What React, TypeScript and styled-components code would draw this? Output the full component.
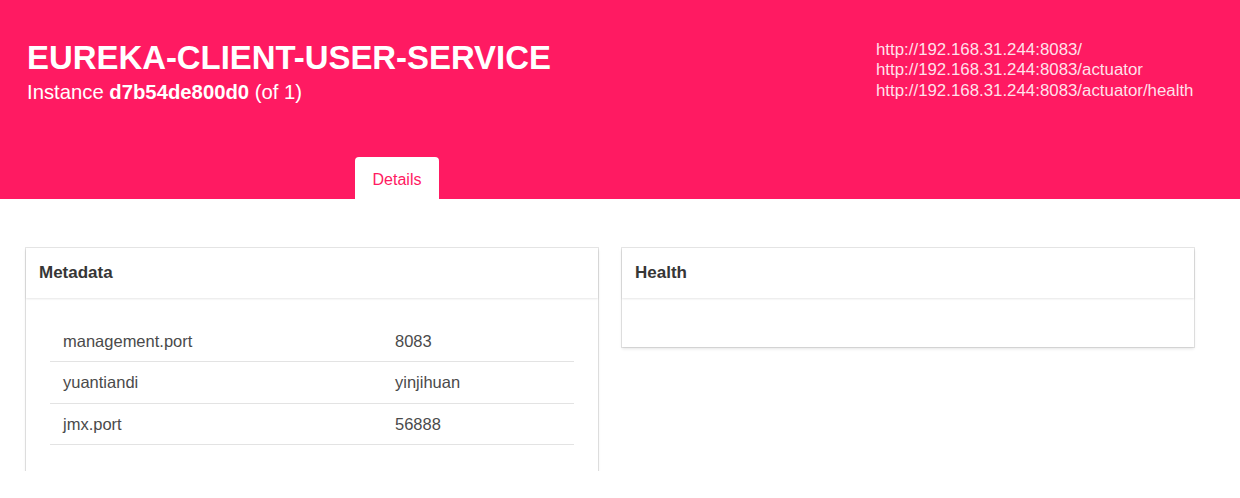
import React from "react";
import styled, { createGlobalStyle } from "styled-components";

const Global = createGlobalStyle`
  html, body { margin: 0; padding: 0; background: #fff; }
  body { font-family: "Liberation Sans", Arial, sans-serif; color: #4a4a4a; }
  * { box-sizing: border-box; }
`;

const PINK = "#ff1a62";

const Hero = styled.header`
  background: ${PINK};
  height: 199px;
  display: flex;
  flex-direction: column;
  justify-content: space-between;
  padding: 40px 0 0 27px;
`;

const HeroTop = styled.div`
  display: grid;
  grid-template-columns: 1fr 364px;
  align-items: start;
`;

const Title = styled.h1`
  margin: 0;
  font-size: 32.9px;
  line-height: 36px;
  font-weight: 700;
  color: #fff;
`;

const Subtitle = styled.h2`
  margin: 3px 0 0;
  font-size: 20.3px;
  line-height: 26px;
  font-weight: 400;
  color: #fff;
  b { font-weight: 700; }
`;

const Links = styled.ul`
  list-style: none;
  margin: 0;
  padding: 0;
  font-size: 16.85px;
  line-height: 20.4px;
`;

const LinkItem = styled.li`
  a { color: rgba(255, 255, 255, 0.88); text-decoration: none; }
`;

const Tabs = styled.nav`
  display: flex;
  padding-left: 328px;
`;

const Tab = styled.a<{ $active?: boolean }>`
  display: block;
  width: 84px;
  height: 42px;
  line-height: 46px;
  text-align: center;
  font-size: 16px;
  border-radius: 4px 4px 0 0;
  background: ${(p) => (p.$active ? "#fff" : "transparent")};
  color: ${(p) => (p.$active ? PINK : "#fff")};
  text-decoration: none;
`;

const Body = styled.main`
  display: grid;
  grid-template-columns: 572px 572px;
  column-gap: 24px;
  align-items: start;
  padding: 49px 0 0 26px;
`;

const Card = styled.section`
  background: #fff;
  box-shadow: 0 2px 3px rgba(10, 10, 10, 0.1), 0 0 0 1px rgba(10, 10, 10, 0.1);
`;

const CardHeader = styled.div`
  height: 50px;
  display: flex;
  align-items: center;
  padding: 0 13px;
  box-shadow: 0 1px 2px rgba(10, 10, 10, 0.1);
  font-size: 17px;
  font-weight: 700;
  color: #363636;
`;

const CardContent = styled.div`
  padding: 22px 24px 26px;
  min-height: 49px;
`;

const Table = styled.table`
  width: 100%;
  border-collapse: collapse;
  table-layout: fixed;
  font-size: 16.5px;
  color: #4a4a4a;
`;

const Row = styled.tr`
  border-bottom: 1px solid #e3e3e3;
`;

const Cell = styled.td<{ $key?: boolean }>`
  padding: 8px 13px 8px;
  height: 41.5px;
  line-height: 24px;
  width: ${(p) => (p.$key ? "332px" : "auto")};
`;

const metadata: [string, string][] = [
  ["management.port", "8083"],
  ["yuantiandi", "yinjihuan"],
  ["jmx.port", "56888"],
];

const links = [
  "http://192.168.31.244:8083/",
  "http://192.168.31.244:8083/actuator",
  "http://192.168.31.244:8083/actuator/health",
];

export default function App() {
  return (
    <>
      <Global />
      <Hero>
        <HeroTop>
          <div>
            <Title>EUREKA-CLIENT-USER-SERVICE</Title>
            <Subtitle>
              Instance <b>d7b54de800d0</b> (of 1)
            </Subtitle>
          </div>
          <Links>
            {links.map((l) => (
              <LinkItem key={l}>
                <a href={l}>{l}</a>
              </LinkItem>
            ))}
          </Links>
        </HeroTop>
        <Tabs>
          <Tab $active href="#">Details</Tab>
        </Tabs>
      </Hero>
      <Body>
        <Card>
          <CardHeader>Metadata</CardHeader>
          <CardContent>
            <Table>
              <tbody>
                {metadata.map(([k, v]) => (
                  <Row key={k}>
                    <Cell $key>{k}</Cell>
                    <Cell>{v}</Cell>
                  </Row>
                ))}
              </tbody>
            </Table>
          </CardContent>
        </Card>
        <Card>
          <CardHeader>Health</CardHeader>
          <CardContent />
        </Card>
      </Body>
    </>
  );
}
